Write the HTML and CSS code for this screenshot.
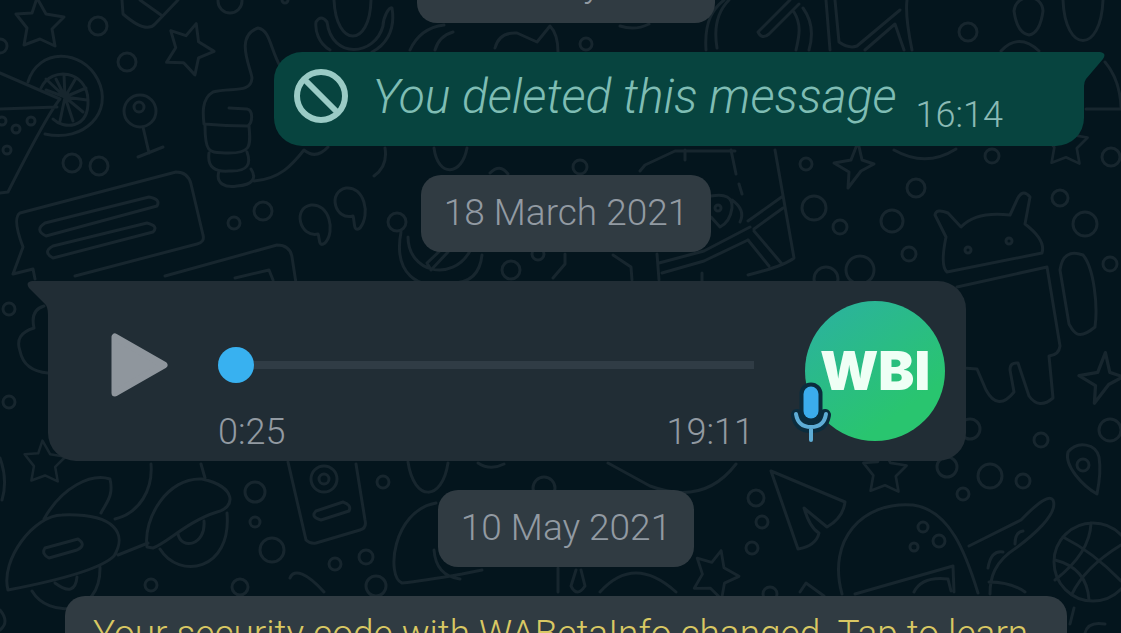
FILE: index.html
```html
<!DOCTYPE html>
<html lang="en">
<head>
<meta charset="utf-8">
<meta name="viewport" content="width=device-width, initial-scale=1">
<title>Chat</title>
<link rel="stylesheet" href="styles.css">
</head>
<body>
<svg class="wallpaper" viewBox="0 0 1121 633" preserveAspectRatio="xMidYMin slice" aria-hidden="true">
  <defs>
    <path id="star" d="M-3-24 6-8 24-5 12 7 15 24 0 17-16 23-13 6-24-8-8-9Z"/>
    <path id="spark" d="M4-24 8-6 20-2 7 5-6 22-5 6-20-3-3-6Z"/>
  </defs>
  <!-- stars and sparkles -->
  <use href="#star" x="40" y="22"/>
  <use href="#star" transform="translate(190 47) rotate(22)"/>
  <use href="#star" transform="translate(45 461) scale(.85)"/>
  <use href="#star" transform="translate(716 573) rotate(20) scale(.95)"/>
  <use href="#star" transform="translate(885 470) scale(.9)"/>
  <use href="#star" transform="translate(1066 142) scale(.9)"/>
  <use href="#spark" x="854" y="166"/>
  <use href="#spark" transform="translate(1101 379) scale(1.1)"/>
  <!-- bubbles -->
  <circle cx="98" cy="26" r="9"/><circle cx="127" cy="62" r="9"/><circle cx="72" cy="163" r="9"/><circle cx="99" cy="166" r="9"/>
  <circle cx="263" cy="211" r="9"/><circle cx="234" cy="223" r="6"/><circle cx="0" cy="46" r="7"/>
  <circle cx="9" cy="309" r="6"/><circle cx="9" cy="402" r="6"/>
  <circle cx="255" cy="492" r="10"/><circle cx="255" cy="522" r="5"/><circle cx="272" cy="550" r="12"/><circle cx="151" cy="585" r="6"/><circle cx="240" cy="587" r="8"/><circle cx="335" cy="564" r="6"/><circle cx="366" cy="557" r="7"/><circle cx="376" cy="586" r="10"/>
  <circle cx="383" cy="482" r="6"/><circle cx="544" cy="488" r="11"/>
  <circle cx="580" cy="167" r="7"/><circle cx="586" cy="44" r="6"/><circle cx="397" cy="222" r="9"/><circle cx="511" cy="270" r="9"/><circle cx="538" cy="254" r="6"/>
  <circle cx="968" cy="32" r="9"/><circle cx="806" cy="164" r="6"/><circle cx="814" cy="208" r="12"/><circle cx="840" cy="227" r="7"/><circle cx="892" cy="221" r="11"/><circle cx="916" cy="188" r="9"/><circle cx="909" cy="254" r="7"/><circle cx="992" cy="156" r="7"/><circle cx="1060" cy="198" r="8"/><circle cx="1085" cy="224" r="12"/><circle cx="1111" cy="157" r="9"/><circle cx="1110" cy="264" r="7"/><circle cx="860" cy="270" r="14"/><circle cx="826" cy="279" r="12"/>
  <circle cx="970" cy="429" r="10"/><circle cx="1110" cy="430" r="11"/><circle cx="1041" cy="440" r="7"/><circle cx="947" cy="467" r="10"/><circle cx="990" cy="476" r="12"/><circle cx="1023" cy="481" r="7"/><circle cx="963" cy="494" r="6"/><circle cx="756" cy="498" r="8"/><circle cx="762" cy="522" r="6"/><circle cx="752" cy="548" r="6"/><circle cx="770" cy="594" r="7"/>
  <circle cx="230" cy="1" r="12"/><circle cx="285" cy="0" r="3"/>
  <!-- citrus and pizza -->
  <path d="M28 82C38 48 82 48 98 80S84 143 45 134M41 88c10-22 46-18 47 12S63 129 53 119M65 97 64 75M65 97l11-19M65 97l21-9M65 97l22 3M65 97l18 15M65 97l8 24M65 97l-5 24M65 97 46 79M65 97l-9-18M65 97l-19-7"/>
  <path d="M0 73 60 99Q48 113 8 192L0 193M0 109 57 107"/>
  <circle cx="2" cy="121" r="4"/><circle cx="16" cy="129" r="4"/><circle cx="31" cy="121" r="4"/><circle cx="7" cy="150" r="4"/>
  <!-- medal -->
  <circle cx="140" cy="111" r="16"/><circle cx="139" cy="107" r="5"/><path d="m143 127 6 26M138 157l25-10"/>
  <!-- pencil and microphone -->
  <path d="M122 0 123 14Q146 34 155 24L178 0M140 0l21 15"/>
  <path d="M334 0c2 48 36 48 37 0M330 50C318 43 315 30 316 22q5-8 11 0c5 38 48 34 56 4 0-8 6-20 9-18 4 24-8 38-20 44"/>
  <!-- thumbs up -->
  <path d="M280 66C270 48 270 30 258 28c-24 8-7 40-6 50-1 16-21 9-39 14-12 7-10 23-9 32q22 2 44 2c5-4 5-16-1-17l-18-1M205 126c0 28 5 26 20 27 26 1 26-6 24-27M209 153c-2 15 7 19 20 18 20 1 22-8 18-19M219 171c-4 13 7 17 18 15 16-1 20-8 14-17M254 181c26-2 38-16 50-31q12 10 24-3"/>
  <!-- quotes -->
  <path d="M318 234c-18 4-26-26-7-29 18-2 25 26 14 38-7 5-5-5-7-9ZM353 216c-18 5-26-24-7-28 18-2 25 26 14 40-7 5-5-6-7-12Z"/>
  <!-- chat doodle cards -->
  <path d="m13 274 10-27q-11-29-3-34l156-41q12 0 15 12l12 51q2 7-6 9L75 276M13 274l20-5 2 10M45 223l104-26q12 2 8 9L46 236q-12-6-1-13ZM53 246l94-23q12 3 6 9L53 258q-11-6 0-12ZM165 276l112-31q13 0 15 12l4 26M235 278l34-8 4 10"/>
  <!-- rocket plane -->
  <path d="M8 590C0 560 34 515 62 515c55-2 65 20 52 41C100 570 55 581 8 590ZM44 519c18-32 47-46 66-40 4 17-4 24-9 34M115 519c25-6 38-30 36-55M32 591c16 27 69 26 68-24M55 583q20 15 22-6M45 548l33-9q9 6-1 11l-28 8q-8-4-4-10ZM118 555l30-12"/>
  <path d="M147 547c-4-28 20-70 55-68 36 8 33 29 15 33-29 9-50 31-64 36ZM160 549c19 31 72 22 67-36M178 534c3 16 28 12 26-13M201 464l4 14"/>
  <!-- identity card, whistle -->
  <path d="m288 462 18 78q4 4 10 3l44-13q7-2 5-10l-9-56M316 511l27-9q9 3 6 9l-28 9q-11-3-5-9M290 578c4-10 17-5 34 14"/><circle cx="324" cy="479" r="13"/><circle cx="324" cy="479" r="5"/>
  <!-- glimpses between the messages -->
  <path d="M410 50q10-22 34-25M435 50q4-14 18-18M495 48q4-16 22-15l20 9 13-16q8 8 8 26M620 26q15 5 29-2M706 50c-2-30 8-42 18-50M717 48c-4-24 2-38 12-48"/>
  <path d="M434 148c4 30 28 28 33 0M374 176q14-10 11-28M490 173q10-10 18 1M640 171l5-6 30-14 60 0M685 150v10M731 150l5 24M739 184l3 10"/>
  <circle cx="718" cy="208" r="3"/>
  <path d="M711 196q22-4 21 12-2 14-12 19l-9-10M732 200q14 10 8 22"/>
  <path d="M401 232c-8 42 18 58 44 51M482 255q-3 28-30 28M408 237c0 35 44 46 62 14M427 263l17-16 4 5-17 18ZM553 278l12-14v-10M613 255l18 12 1 13M659 280l-2-26M659 263l45-12 46-24M662 273l42-12 44-21M702 273v8"/>
  <!-- tools, balloons -->
  <path d="m790 0-32 32q4 8 11 2l30-30M794 12c8 13 5 25 2 38M803 8q13 18 6 42M826 0l4 50M835 0l4 42q10 7 18 4L900 10M865 50l30-26 9 26M912 50q-7-34-5-50"/>
  <path d="M1014 11c2-18 28-18 29 0q-3 22-14 24-12-2-15-24ZM1063 0c2 54 38 54 40 0M1001 51q18-19 38 0M894 150q32 18 62-1M1105 62q15 18 16 45M1086 109h35"/>
  <path d="m775 150 19 108q-10 8-46 17M748 221l35-25M754 229l29-21M754 231l28 33M748 240l21 26"/>
  <!-- robot -->
  <path d="m961 227-13-14q-12-5-13 2l11 22q-6 29 1 35l95-19q4-13-17-29l5-27q-8-10-14 5l-6 13q-34-4-49 12ZM957 287l90-20 13 79q-1 9-11 10l4 42q-14 12-24-2l-11-33q-8-1-8 7l4 22q-16 20-28-2l-9-21-14-1M1060 270q3-22 23-15c11 13 15 51 12 72-18 15-22 4-26-3Z"/><circle cx="968" cy="250" r="3"/><circle cx="1009" cy="241" r="3"/>
  <!-- cloud, paper plane, bowl -->
  <path d="M44 306q-14 4-10 22-20 6-14 23 4 20 28 22M0 458q8 22 2 42M0 610q10 12 0 20"/>
  <path d="m771 471 74 31q-2 16-18 25l-23-19q6 20 15 25-3 13-21 16Z"/>
  <path d="M408 462c6 40 34 40 40 1M478 463q12 8 26 1M608 463l42 23q54 20 86-22M436 503c-44 8-50 74-34 80q20-2 60-9l20-4M434 550q2 26 26 29M558 568v24M600 592q34-38 76 0M576 570l-5 16q6 12 14 0l-4-16"/>
  <!-- helmet, carrot, basketball, pin -->
  <path d="M842 594c-15-54 20-93 71-89 37 5 53 49 65 88M855 594l98-28 1 26M914 592q8-16 34-13l3 12M969 546l52-26q27-28 32-20c6 14-22 37-37 48-22 14-26 30-26 46M989 582q22 0 36 10"/>
  <circle cx="923" cy="527" r="5"/><circle cx="939" cy="541" r="6"/><circle cx="914" cy="547" r="4"/><path d="M988 568q3-18 15-16M1015 544q0-12 8-13"/>
  <circle cx="1093" cy="562" r="39"/><path d="M1063 537q30 15 58 44M1091 523q-1 30-36 57M1055 560q32 8 34 40M1121 545q-36 22-49 49"/>
  <path d="M1097 494c-14-8-33-28-29-42 10-12 28-8 31 5 2 12 0 27-2 37Z"/><circle cx="1083" cy="465" r="6"/>
  <path d="M800 592l6-9 18 13M1074 608l-4 16M1085 633q3-12 20-9"/>
</svg>

<main class="feed">
  <time class="date">9 January 2021</time>

  <article class="bubble deleted">
    <svg class="ban" viewBox="0 0 54 54" aria-hidden="true"><circle cx="27" cy="27" r="24"/><path d="m10 10 34 34"/></svg>
    <p class="deleted-text">You deleted this message</p>
    <time class="sent">16:14</time>
    <svg class="tail tail-out" viewBox="0 0 45 34" aria-hidden="true"><path d="M0 0H40Q47 1 43 7L26 27Q24 30 24 34H0Z"/></svg>
  </article>

  <time class="date">18 March 2021</time>

  <article class="bubble voice">
    <svg class="tail tail-in" viewBox="0 0 45 34" aria-hidden="true"><path d="M45 0H5Q-2 1 2 7L18 23Q21 26 21 34H45Z"/></svg>
    <button class="play" type="button" aria-label="Play voice message">
      <svg viewBox="0 0 58 64" aria-hidden="true"><path d="M4 4v56L53 32Z"/></svg>
    </button>
    <div class="player">
      <input class="seek" type="range" min="0" max="1151" value="0" aria-label="Position">
      <div class="times"><span>0:25</span><span>19:11</span></div>
    </div>
    <div class="avatar">
      <span class="avatar-name">WBI</span>
      <svg class="mic" viewBox="0 0 40 66" aria-hidden="true">
        <path class="mic-edge" d="M6 36q2 12 14 12t14-12"/>
        <path class="mic-shell" d="M20 15v17"/>
        <path class="mic-arc" d="M5 35q2 13 15 13t15-13M20 48v13"/>
        <path class="mic-body" d="M20 15v17"/>
      </svg>
    </div>
  </article>

  <time class="date">10 May 2021</time>

  <p class="notice">Your security code with WABetaInfo changed. Tap to learn</p>
</main>
</body>
</html>
```
FILE: styles.css
```css
* { box-sizing: border-box; }

body {
  margin: 0;
  height: 100vh;
  overflow: hidden;
  background: #04151d;
  font-family: Roboto, "Liberation Sans", sans-serif;
  font-weight: 300;
  color: #929aa2;
}

p { margin: 0; }

.wallpaper {
  position: absolute;
  inset: 0;
  width: 100%;
  height: 100%;
  fill: none;
  stroke: #17262e;
  stroke-width: 3;
  stroke-linejoin: round;
  stroke-linecap: round;
}

.feed {
  position: relative;
  display: flex;
  flex-direction: column;
  align-items: center;
  gap: 29px;
  margin-top: -54px;
  padding: 0 37px 0 48px;
}

.date {
  flex: none;
  padding: 16px 23px 17px;
  border-radius: 20px;
  background: #303b42;
  font-size: 37px;
  line-height: 44px;
}

.bubble {
  position: relative;
  flex: none;
  border-radius: 28px;
}

.deleted {
  align-self: flex-end;
  display: flex;
  align-items: center;
  height: 94px;
  padding: 0 81px 0 20px;
  border-top-right-radius: 0;
  background: #07443f;
  color: #7fbdb4;
}

.ban {
  width: 54px;
  height: 54px;
  margin-bottom: 6px;
  fill: none;
  stroke: #9acbc5;
  stroke-width: 6;
}

.deleted-text {
  margin: 0 19px 4px 24px;
  font-size: 48px;
  font-style: italic;
  line-height: 54px;
  white-space: nowrap;
}

.sent {
  align-self: flex-end;
  margin-bottom: 10px;
  font-size: 36px;
  line-height: 42px;
  color: #8bbab5;
}

.tail {
  position: absolute;
  top: 0;
  width: 45px;
  height: 34px;
}

.tail-out { right: -21px; fill: #07443f; }
.tail-in { left: -21px; fill: #212d35; }

.voice {
  align-self: stretch;
  display: flex;
  align-items: center;
  height: 180px;
  margin-right: 118px;
  padding: 20px 21px 20px 63px;
  border-top-left-radius: 0;
  background: #212d35;
}

.play {
  flex: none;
  width: 58px;
  height: 64px;
  margin: 0 49px 12px 0;
  padding: 0;
  border: 0;
  background: none;
}

.play svg {
  display: block;
  width: 58px;
  height: 64px;
  fill: #8f969d;
  stroke: #8f969d;
  stroke-width: 7;
  stroke-linejoin: round;
}

.player {
  flex: 1;
  padding-top: 57px;
}

.seek {
  appearance: none;
  display: block;
  width: 100%;
  height: 36px;
  margin: 0;
  background: linear-gradient(#303c45, #303c45) center / 100% 8px no-repeat;
}

.seek::-webkit-slider-thumb {
  appearance: none;
  width: 36px;
  height: 36px;
  border-radius: 50%;
  background: #38b1f0;
}

.times {
  display: flex;
  justify-content: space-between;
  margin-top: 28px;
  font-size: 36px;
  line-height: 42px;
}

.avatar {
  position: relative;
  flex: none;
  display: grid;
  place-items: center;
  width: 140px;
  height: 140px;
  margin-left: 51px;
  border-radius: 50%;
  background: linear-gradient(145deg, #2bb39b 10%, #29c56f 75%);
}

.avatar-name {
  font-family: Inter, sans-serif;
  font-size: 54px;
  font-weight: 900;
  line-height: 60px;
  color: #effff5;
}

.mic {
  position: absolute;
  left: -14px;
  bottom: -4px;
  width: 40px;
  height: 66px;
  overflow: visible;
  fill: none;
  stroke-linecap: round;
}

.mic-edge { stroke: #0b2c3d; stroke-width: 12; }
.mic-shell { stroke: #0b2c3d; stroke-width: 23; }
.mic-arc { stroke: #5eacd5; stroke-width: 4; }
.mic-body { stroke: #3bacec; stroke-width: 15; }

.notice {
  align-self: stretch;
  flex: none;
  margin: 0 17px;
  padding: 16px 28px 0;
  border-radius: 20px 20px 0 0;
  background: #303b42;
  color: #d9c863;
  font-size: 37px;
  line-height: 44px;
  white-space: nowrap;
}
```
